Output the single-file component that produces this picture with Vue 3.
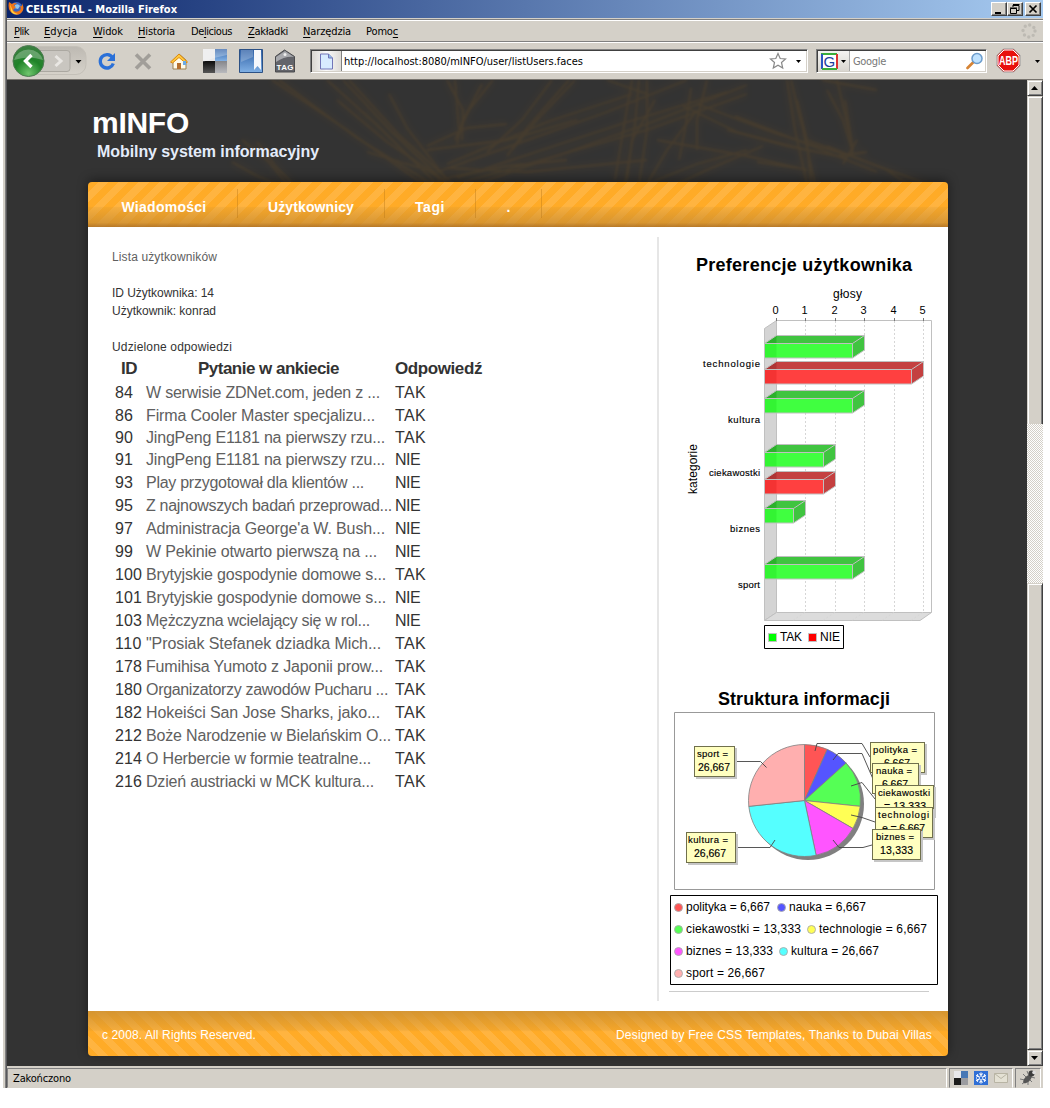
<script setup>
const vFit = {
  mounted(el, { value }) {
    const width = el.getBoundingClientRect().width
    el.style.letterSpacing = (value - width) / el.textContent.length + 'px'
  },
}

const menu = [
  ['', 'P', 'lik', 15, 15],
  ['', 'E', 'dycja', 33, 16],
  ['', 'W', 'idok', 30, 15],
  ['', 'H', 'istoria', 37, 16],
  ['De', 'l', 'icious', 41, 16],
  ['', 'Z', 'akładki', 40, 15],
  ['', 'N', 'arzędzia', 48, 15],
  ['Pomo', 'c', '', 32, 0],
]

const nav = [
  ['Wiadomości', 150, 85],
  ['Użytkownicy', 147, 86],
  ['Tagi', 91, 30],
  ['.', 66, 4],
]

const rows = [
  [84, 'W serwisie ZDNet.com, jeden z ...', 'TAK', 234],
  [86, 'Firma Cooler Master specjalizu...', 'TAK', 229],
  [90, 'JingPeng E1181 na pierwszy rzu...', 'TAK', 239],
  [91, 'JingPeng E1181 na pierwszy rzu...', 'NIE', 239],
  [93, 'Play przygotował dla klientów ...', 'NIE', 218],
  [95, 'Z najnowszych badań przeprowad...', 'NIE', 246],
  [97, "Administracja George'a W. Bush...", 'NIE', 239],
  [99, 'W Pekinie otwarto pierwszą na ...', 'NIE', 231],
  [100, 'Brytyjskie gospodynie domowe s...', 'TAK', 240],
  [101, 'Brytyjskie gospodynie domowe s...', 'NIE', 240],
  [103, 'Mężczyzna wcielający się w rol...', 'NIE', 224],
  [110, '"Prosiak Stefanek dziadka Mich...', 'TAK', 235],
  [178, 'Fumihisa Yumoto z Japonii prow...', 'TAK', 237],
  [180, 'Organizatorzy zawodów Pucharu ...', 'TAK', 242],
  [182, 'Hokeiści San Jose Sharks, jako...', 'TAK', 234],
  [212, 'Boże Narodzenie w Bielańskim O...', 'TAK', 245],
  [214, 'O Herbercie w formie teatralne...', 'TAK', 225],
  [216, 'Dzień austriacki w MCK kultura...', 'TAK', 228],
]

const ticks = [776.5, 805.5, 835.5, 864.5, 894.5, 923.5]
const bars = [
  [343.5, 3, 'g'],
  [369.5, 5, 'r'],
  [398.5, 3, 'g'],
  [452.5, 2, 'g'],
  [479.5, 2, 'r'],
  [508.5, 1, 'g'],
  [564.5, 3, 'g'],
].map(([y, v, c]) => ({ y, c, x: Math.round(764 + 29.4 * v) + 0.5 }))
const fills = {
  g: ['#40ff40', '#40c440', '#33f433', '#2bb12b'],
  r: ['#ff4040', '#c44040', '#f43333', '#ae3535'],
}
const categories = [
  ['technologie', 703, 367, 57],
  ['kultura', 728, 423, 32],
  ['ciekawostki', 709, 476, 51],
  ['biznes', 730, 532, 30],
  ['sport', 738, 588, 22],
]

const slices = [
  [0, 24, '#ff5555'],
  [24, 48, '#5555ff'],
  [48, 96, '#55ff55'],
  [96, 120, '#ffff55'],
  [120, 168, '#ff55ff'],
  [168, 264, '#55ffff'],
  [264, 360, '#ffafaf'],
].map(([a, b, color]) => {
  const at = (deg) => {
    const t = (deg * Math.PI) / 180
    return `${(804.5 + 56 * Math.sin(t)).toFixed(2)},${(800.5 - 56 * Math.cos(t)).toFixed(2)}`
  }
  return { color, d: `M804.5,800.5L${at(a)}A56,56 0 0 1 ${at(b)}Z` }
})
const leaders = [
  '815,751 817,743.5 862,743.5 870,757',
  '833,760 838,753.5 862,753.5 873,779',
  '851,786 862,782.5 875,799',
  '851,815 862,817.5 875,822',
  '833,840 839,847.5 863,847.5 872,845',
  '766.5,767.5 760.5,761.5 735,761.5',
  '775,840 770,847.5 736,847.5',
]
const tags = [
  [694, 746, 41, 31, 'sport =', 697, 31, '26,667', 698, 32],
  [686, 832, 50, 31, 'kultura =', 688, 40, '26,667', 694, 32],
  [870, 742, 55, 31, 'polityka =', 873, 44, '6,667', 884, 26],
  [872, 763, 47, 31, 'nauka =', 876, 36, '6,667', 882, 26],
  [875, 785, 59, 31, 'ciekawostki', 878, 52, '= 13,333', 884, 42],
  [875, 807, 58, 31, 'technologi', 878, 51, 'e = 6,667', 882, 43],
  [872, 829, 49, 31, 'biznes =', 876, 38, '13,333', 880, 33],
]
const legend = [
  [[678.5, 'polityka = 6,667', 686, 84, '#ff5555'], [781.5, 'nauka = 6,667', 789, 77, '#5555ff']],
  [[678.5, 'ciekawostki = 13,333', 686, 115, '#55ff55'], [811.5, 'technologie = 6,667', 819, 108, '#ffff55']],
  [[678.5, 'biznes = 13,333', 686, 87, '#ff55ff'], [783.5, 'kultura = 26,667', 791, 88, '#55ffff']],
  [[678.5, 'sport = 26,667', 686, 79, '#ffafaf']],
]

const wisps = [
  'M265 0L340 50 410 100 440 104', 'M272 0L350 58 425 104', 'M320 0L370 45 430 104', 'M336 0L385 52 440 104',
  'M342 0L392 55 446 104', 'M382 14L400 48 440 100', 'M330 20L380 62 440 102', 'M440 0L456 30 455 60', 'M475 4L455 42 450 64',
  'M486 0L462 30 448 60', 'M545 0L515 40 480 72', 'M568 0L530 40 505 70', 'M562 0L520 48 500 76', 'M625 14L540 42 440 84',
  'M680 0L600 32 430 92', 'M720 12L620 42 450 98', 'M740 5L640 44 470 104', 'M740 14L640 50 450 104', 'M625 0L618 40 608 100',
  'M632 0L628 45 618 104', 'M640 0L640 50 632 104', 'M648 20L625 60 620 100', 'M684 8L678 50 672 80', 'M690 30L660 70 640 104',
  'M676 26L730 52 800 70', 'M690 24L770 54 850 78', 'M728 36L800 64 870 92', 'M780 0L788 50 800 104', 'M784 0L796 50 808 104',
  'M790 20L800 60 804 104', 'M830 0L838 34 846 70', 'M820 10L836 40 846 74', 'M838 20L846 70', 'M800 60L860 82 920 104',
  'M820 66L880 90 900 104', 'M740 70L690 84 640 104', 'M756 66L700 90 670 104', 'M790 88L750 82', 'M420 70L500 60 570 40',
  'M360 72L420 90 440 104', 'M235 60L260 80 280 104', 'M225 82L250 96 270 104', 'M250 62L270 88 286 104', 'M440 88L520 92 640 80',
  'M430 100L500 86 560 80', 'M420 66L460 48 500 44', 'M448 0L452 50', 'M700 0L690 40 690 70', 'M815 0L870 10',
  'M600 0L640 14', 'M720 50L780 66 840 78', 'M650 60L740 76 800 90', 'M850 60L836 84', 'M830 76L860 72',
]
</script>

<template>
  <div class="window">
    <header class="titlebar">
      <svg width="17" height="17" viewBox="0 0 17 17"><circle cx="8.5" cy="7.5" r="6.5" fill="#3b66bd" /><path d="M7 4q3-2 5 1l-2 3-4-1z" fill="#8ac4ef" /><path d="M1 1l3 2q3-2 5 0-3 0-3 2l2 1-3 3q2 3 6 1 3-2 1-5 3 1 2-3 3 5 0 9-3 4-8 2Q-1 10 1 1z" fill="#ee7417" /><path d="M2 3l1 7q2 4 7 3-5-1-6-5z" fill="#ffd13c" /></svg>
      <b v-fit="151">CELESTIAL - Mozilla Firefox</b>
      <div class="winbtns">
        <i><svg width="14" height="13"><path d="M3 10h6" stroke="#000" stroke-width="2" /></svg></i>
        <i><svg width="14" height="13"><path d="M5 2.5h6v5H9M5 2v2M5 1.5h6.500M2.500 5.500h6v5h-6zM2 5h7" fill="none" stroke="#000" /></svg></i>
        <i class="close"><svg width="14" height="13"><path d="M3.500 2.500l7 7M10.500 2.500l-7 7" stroke="#000" stroke-width="1.700" /></svg></i>
      </div>
    </header>

    <nav class="menubar">
      <span v-for="m in menu" :key="m[2]" v-fit="m[3]" :style="{ marginRight: m[4] + 'px' }">{{ m[0] }}<u>{{ m[1] }}</u>{{ m[2] }}</span>
      <svg class="throbber" width="18" height="18" viewBox="-9 -9 18 18"><circle r="6" fill="none" stroke="#bdbab3" stroke-width="3.400" stroke-linecap="round" stroke-dasharray="0 4.712" /></svg>
    </nav>

    <div class="toolbar">
      <svg class="back" width="82" height="36" viewBox="7 43 82 36">
        <defs>
          <radialGradient id="green" cx=".5" cy=".9" r=".9"><stop offset="0" stop-color="#6fc56d" /><stop offset=".5" stop-color="#1f8328" /><stop offset="1" stop-color="#3d7f42" /></radialGradient>
          <linearGradient id="pill" x2="0" y2="1"><stop offset="0" stop-color="#bdb9b2" /><stop offset="1" stop-color="#d6d2ca" /></linearGradient>
        </defs>
        <rect x="15" y="46.500" width="71" height="28" rx="10" fill="url(#pill)" stroke="#c4c0b8" />
        <path d="M40 50.500h27q3 0 3 3v15q0 3-3 3H40" fill="#c9c6c0" stroke="#aba8a1" />
        <path d="M55.500 56l5.500 5-5.500 5" fill="none" stroke="#e9e7e3" stroke-width="3" />
        <circle cx="28.500" cy="61" r="15.500" fill="url(#green)" stroke="#4f7c53" />
        <path d="M14 60a15 14 0 0 1 29 0q-14-5-29 0z" fill="#fff" opacity=".27" />
        <path d="M31.500 55l-6 6 6 6" fill="none" stroke="#fff" stroke-width="3.400" />
        <path d="M75.500 60h6l-3 3.500z" />
      </svg>
      <svg class="tool" width="36" height="28" viewBox="89 47 36 28"><path d="M112.500 57.500a6.700 6.700 0 1 0 .8 6" fill="none" stroke="#2a70d8" stroke-width="3.300" /><path d="M115 53v8h-8z" fill="#2a70d8" /></svg>
      <svg class="tool" width="36" height="28" viewBox="125 47 36 28"><path d="M136 54.500l14 14M150 54.500l-14 14" stroke="#a19e99" stroke-width="3.600" /></svg>
      <svg class="tool" width="36" height="28" viewBox="161 47 36 28"><path d="M173 60v9h13v-9l-7-6z" fill="#fffbe9" stroke="#9b8252" /><path d="M170.500 62l8.500-8 8.500 8-2 1-6.500-5.500-6.500 5.500z" fill="#ffc83d" stroke="#dc8a11" /><path d="M177 63h4v6h-4z" fill="#b6702e" /><path d="M183 61h3v4h-3z" fill="#69abe7" /></svg>
      <svg class="tool" width="36" height="28" viewBox="197 47 36 28">
        <defs>
          <linearGradient id="dark" x2="0" y2="1"><stop offset="0" stop-color="#0c0c0c" /><stop offset="1" stop-color="#555" /></linearGradient>
          <linearGradient id="blue" x2="0" y2="1"><stop offset="0" stop-color="#2e5fa5" /><stop offset="1" stop-color="#81b1e5" /></linearGradient>
          <linearGradient id="gray" x2="0" y2="1"><stop offset="0" stop-color="#85868a" /><stop offset="1" stop-color="#b9babe" /></linearGradient>
        </defs>
        <path d="M203 49h12v12h-12z" fill="#e9e9eb" /><path d="M215 49h12v12h-12z" fill="url(#blue)" /><path d="M203 61h12v12h-12z" fill="url(#dark)" /><path d="M215 61h12v12h-12z" fill="url(#gray)" /><path d="M203 49h24v6q-12 2-24 7z" fill="#fff" opacity=".28" />
      </svg>
      <svg class="tool" width="36" height="28" viewBox="233 47 36 28"><path d="M239.500 49.500h23v23h-23z" fill="url(#blue)" stroke="#2c5185" /><path d="M254 50h7v20l-3.500-4-3.500 4z" fill="#f5f7fb" /><path d="M241 62l12-5v-7h-12z" fill="#fff" opacity=".22" /></svg>
      <svg class="tool" width="36" height="28" viewBox="269 47 36 28"><path d="M275.500 56.500l9-6.500 10 6.500v15.500h-19z" fill="#63646a" stroke="#4a4b4e" /><path d="M276 57l9-6 9 6q-9-1-18 5z" fill="#a9aaae" /><circle cx="285" cy="54.500" r="1.500" fill="#eee" /><text x="276.500" y="70" textLength="17" font-family="Liberation Sans, sans-serif" font-size="8" font-weight="700" fill="#fff">TAG</text></svg>
      <div class="field url">
        <span class="favicon"><svg width="15" height="17"><path d="M1.500 1h8l4 4v11h-12z" fill="#d8ebff" stroke="#7276b8" /><path d="M9.500 1v4h4" fill="#90bde9" stroke="#7276b8" /></svg></span>
        <span v-fit="239" class="address">http://localhost:8080/mINFO/user/listUsers.faces</span>
        <svg class="star" width="18" height="18" viewBox="0 0 18 18"><path d="M9 1.500l2.200 5 5.300.5-4 3.500 1.200 5.500L9 13.200 4.300 16l1.200-5.500-4-3.500 5.300-.5z" fill="#fff" stroke="#888" stroke-width="1.200" /></svg>
        <svg width="5" height="3"><path d="M0 0h5L2.500 3z" /></svg>
      </div>
      <div class="field search">
        <span class="engine"><svg width="17" height="17"><path d="M.5.500h16v16H.5z" fill="#fff" /><path d="M0 1h16" stroke="#3aad3a" stroke-width="2" /><path d="M1 1v15" stroke="#2a56c4" stroke-width="2" /><path d="M16 1v15" stroke="#d33" stroke-width="2" /><path d="M1 16h15" stroke="#3aad3a" stroke-width="2" /><text x="2.500" y="14" font-family="Liberation Sans, sans-serif" font-size="15" fill="#1d3d9e">G</text></svg><svg width="5" height="3"><path d="M0 0h5L2.500 3z" /></svg></span>
        <span v-fit="33" class="hint">Google</span>
        <svg class="lens" width="18" height="18"><path d="M1.500 16l6-6" stroke="#d68435" stroke-width="2.600" stroke-linecap="round" /><circle cx="11" cy="6.500" r="5" fill="#bfe2ff" stroke="#6c9ccc" stroke-width="1.500" /></svg>
      </div>
      <svg class="abp" width="25" height="25" viewBox="-12.500 -12.500 25 25"><path d="M-5-11.500H5L11.500-5V5L5 11.500H-5L-11.500 5V-5z" fill="#e8110c" stroke="#999" /><path d="M-4.500-10.500h9l6 6v9l-6 6h-9l-6-6v-9z" fill="none" stroke="#fff" /><text x="-9.500" y="4.500" textLength="19" lengthAdjust="spacingAndGlyphs" font-family="Liberation Sans, sans-serif" font-size="12" font-weight="700" fill="#fff">ABP</text></svg>
      <svg class="more" width="5" height="3"><path d="M0 0h5L2.500 3z" /></svg>
    </div>

    <div class="viewport">
      <main class="canvas">
        <div class="hero">
          <svg class="grass" width="1020" height="104" viewBox="0 0 1020 104">
            <g class="haze"><path v-for="w in wisps" :key="w" :d="w" /></g>
            <g class="strand"><path v-for="w in wisps" :key="w" :d="w" /></g>
          </svg>
          <h1><span v-fit="97">mINFO</span></h1>
          <h2><span v-fit="222">Mobilny system informacyjny</span></h2>
        </div>
        <div class="page">
          <nav class="tabs">
            <a v-for="n in nav" :key="n[0]" :style="{ width: n[1] + 'px' }"><span v-fit="n[2]">{{ n[0] }}</span></a>
          </nav>
          <div class="body">
            <section class="main">
              <p class="link"><span v-fit="105">Lista użytkowników</span></p>
              <p class="gap"><span v-fit="102">ID Użytkownika: 14</span></p>
              <p><span v-fit="104">Użytkownik: konrad</span></p>
              <p class="gap"><span v-fit="120">Udzielone odpowiedzi</span></p>
              <table>
                <thead>
                  <tr><th class="id"><span v-fit="16">ID</span></th><th class="q"><span v-fit="141">Pytanie w ankiecie</span></th><th class="a"><span v-fit="87">Odpowiedź</span></th></tr>
                </thead>
                <tbody>
                  <tr v-for="r in rows" :key="r[0]"><td><span v-fit="String(r[0]).length * 9">{{ r[0] }}</span></td><td class="link"><span v-fit="r[3]">{{ r[1] }}</span></td><td><span v-fit="r[2] === 'TAK' ? 31 : 25">{{ r[2] }}</span></td></tr>
                </tbody>
              </table>
            </section>
            <aside>
              <svg width="280" height="418" viewBox="660 237 280 418">
                <text class="title" x="696" y="271" textLength="216">Preferencje użytkownika</text>
                <text x="833" y="298" textLength="29">głosy</text>
                <text v-for="(t, i) in ticks" :key="t" class="tick" :x="t - 1" y="314">{{ i }}</text>
                <path d="M764.500 328.500l12-8v292l-12 8z" fill="#d4d4d4" stroke="#c0c0c0" />
                <path d="M764.500 620.500l12-8h155l-11.500 8z" fill="#dcdcdc" stroke="#c0c0c0" />
                <path d="M776.500 320.500h155v292" fill="none" stroke="#c0c0c0" />
                <path v-for="t in ticks.slice(1)" :key="t" :d="`M${t} 321V612l-12 8`" fill="none" stroke="#d6d6d6" stroke-dasharray="2 2" />
                <path v-for="t in ticks" :key="t" :d="`M${t} 318v3`" stroke="#777" />
                <g v-for="b in bars" :key="b.y">
                  <path :d="`M764.500 ${b.y}H${b.x}v14.500H764.500z`" :fill="fills[b.c][0]" />
                  <path :d="`M764.500 ${b.y}l12-8H${b.x + 12}v14.500l-12 8v-14.500z`" :fill="fills[b.c][1]" />
                  <path :d="`M764.500 ${b.y}h12v14.500h-12z`" :fill="fills[b.c][2]" />
                  <path :d="`M764.500 ${b.y}l12-8v8z`" :fill="fills[b.c][3]" />
                  <path :d="`M764.500 ${b.y}l12-8H${b.x + 12}v14.500l-12 8H764.500zM764.500 ${b.y}H${b.x}l12-8M${b.x} ${b.y}v14.500`" fill="none" stroke="#c0c0c0" />
                </g>
                <text v-for="c in categories" :key="c[0]" class="small" :x="c[1]" :y="c[2]" :textLength="c[3]">{{ c[0] }}</text>
                <text transform="translate(697 494)rotate(-90)" textLength="50">kategorie</text>
                <path d="M764.500 625.500h79v23h-79z" fill="#fff" stroke="#000" />
                <path d="M768.500 633.500h8v8h-8z" fill="#0f0" stroke="#c0c0c0" /><path d="M808.500 633.500h8v8h-8z" fill="#f00" stroke="#c0c0c0" />
                <text x="780" y="641" textLength="22">TAK</text><text x="820" y="641" textLength="20">NIE</text>
              </svg>
              <svg width="280" height="331" viewBox="660 655 280 331">
                <text class="title" x="718" y="705" textLength="172">Struktura informacji</text>
                <path d="M674.500 712.500h260v177h-260z" fill="#fff" stroke="#999" />
                <circle cx="808" cy="804" r="56" fill="#808080" />
                <path v-for="s in slices" :key="s.d" :d="s.d" :fill="s.color" stroke="#808080" stroke-width=".8" />
                <polyline v-for="l in leaders" :key="l" :points="l" fill="none" stroke="#444" stroke-width=".9" />
                <g v-for="t in tags" :key="t[4]">
                  <rect :x="t[0] + 2" :y="t[1] + 2" :width="t[2]" :height="t[3]" fill="#c6c6c6" />
                  <rect :x="t[0] + .5" :y="t[1] + .5" :width="t[2] - 1" :height="t[3] - 1" fill="#ffffc0" stroke="#70704c" />
                  <text class="small" :x="t[5]" :y="t[1] + 11" :textLength="t[6]">{{ t[4] }}</text>
                  <text class="small num" :x="t[8]" :y="t[1] + 25" :textLength="t[9]">{{ t[7] }}</text>
                </g>
                <path d="M670.500 895.500h267v89h-267z" fill="#fff" stroke="#000" />
                <g v-for="(line, i) in legend" :key="i">
                  <g v-for="k in line" :key="k[1]"><circle :cx="k[0]" :cy="907.500 + i * 22" r="4" :fill="k[4]" stroke="#aaa" stroke-width=".9" /><text :x="k[2]" :y="911 + i * 22" :textLength="k[3]">{{ k[1] }}</text></g>
                </g>
              </svg>
              <hr>
            </aside>
          </div>
          <footer class="foot"><span v-fit="154">c 2008. All Rights Reserved.</span><span v-fit="316">Designed by Free CSS Templates, Thanks to Dubai Villas</span></footer>
        </div>
      </main>
      <div class="scroll">
        <i><svg width="8" height="4"><path d="M0 4h7L3.500 0z" /></svg></i>
        <b class="t1"></b><em></em><b class="t2"></b>
        <i><svg width="8" height="4"><path d="M0 0h7L3.500 4z" /></svg></i>
      </div>
    </div>

    <div class="status">
      <span class="cell grow"><span v-fit="58">Zakończono</span></span>
      <span class="cell icons">
        <svg width="14" height="14"><path d="M0 0h7v7H0z" fill="#e8e8ea" /><path d="M7 0h7v7H7z" fill="#4878b5" /><path d="M0 7h7v7H0z" fill="#1c1c1c" /><path d="M7 7h7v7H7z" fill="#9b9ca0" /></svg>
        <svg width="14" height="14"><path d="M0 0h14v14H0z" fill="#2f6fd6" /><path d="M7 1.500v11M2.200 4.200l9.600 5.600M11.800 4.200L2.200 9.800" stroke="#fff" stroke-width="1.200" /><path d="M5 2.500l2 1.500 2-1.500M5 11.500L7 10l2 1.500M2 6.500l1.800-1.200L3.500 3M12 7.500l-1.800 1.200.3 2.300M12 6.500l-1.800-1.200.3-2.300M2 7.500l1.800 1.200L3.500 11" fill="none" stroke="#fff" stroke-width=".9" /><circle cx="7" cy="7" r="1.200" fill="#2f6fd6" /></svg>
        <svg width="14" height="12"><path d="M.5 1.500h13v9H.5z" fill="#e4e1d4" stroke="#b8b4a4" /><path d="M.5 1.500l6.500 5 6.500-5" fill="none" stroke="#b8b4a4" /></svg>
      </span>
      <span class="cell bug"><svg width="18" height="18"><path d="M1 10l5 1M4 5l4 4M3 15l4-3M9 16v-4M8 2l2 5M13 13l-3-3M16 9l-4-1" stroke="#777" /><ellipse cx="8.500" cy="10" rx="5.500" ry="2.700" transform="rotate(-45 8.500 10)" fill="#555" /><circle cx="12.500" cy="4.500" r="3" fill="#3c3c3c" /><circle cx="15" cy="3.500" r="1.800" fill="#ddd" /></svg></span>
    </div>
  </div>
</template>

<style>
body { margin: 0; background: #fff; overflow: hidden; }
</style>

<style scoped>
* { box-sizing: border-box; }
svg { display: block; flex: none; }
i, em { font-style: normal; }
.window { width: 1040px; height: 1088px; margin-left: 3px; padding-left: 4px; background: linear-gradient(90deg, #d4d0c8 2px, #808080 2px 3px, #59595c 3px 4px, #d4d0c8 4px); font: 11px/15px "DejaVu Sans Condensed", "DejaVu Sans", sans-serif; color: #000; white-space: nowrap; }
.titlebar { height: 18px; display: flex; align-items: center; background: linear-gradient(90deg, #0a246a, #a6caf0); color: #fff; }
.titlebar > svg { margin-left: 1px; }
.titlebar b { margin-left: 1px; }
.winbtns { align-self: flex-start; margin: 2px 2px 0 auto; display: flex; }
.winbtns i { width: 16px; height: 14px; background: #d4d0c8; border: 1px solid; border-color: #fff #404040 #404040 #fff; box-shadow: inset -1px -1px #808080; }
.winbtns .close { margin-left: 2px; }
.menubar { height: 25px; padding: 2px 5px 0 7px; display: flex; align-items: center; border-bottom: 1px solid #fff; background: linear-gradient(#d4d0c8 1px, #808080 1px 2px, #fff 2px 3px, #d4d0c8 3px 23px, #808080 23px); }
.menubar u { text-underline-offset: 2px; }
.throbber { margin-left: auto; }
.toolbar { height: 37px; display: flex; align-items: flex-start; border-bottom: 1px solid #77736d; }
.tool { margin-top: 4px; }
.field { height: 24px; margin-top: 6px; display: flex; align-items: center; background: #fff; border: 1px solid; border-color: #808080 #fff #fff #808080; box-shadow: inset 1px 1px #404040, inset -1px -1px #d4d0c8; }
.url { width: 498px; margin-left: 5px; padding-right: 6px; }
.favicon { width: 30px; height: 20px; margin-left: 1px; display: grid; place-items: center; border-right: 1px solid #808080; background: linear-gradient(90deg, #d9d6d1, #fafafa 50%, #dedbd6); }
.address { margin: 1px 0 0 2px; }
.star { margin-left: auto; margin-right: 9px; }
.search { width: 171px; margin-left: 8px; }
.engine { width: 32px; height: 20px; margin-left: 1px; display: flex; align-items: center; gap: 3px; padding-left: 3px; background: linear-gradient(#f4f3f1, #d9d6d0); border-right: 1px solid #aaa; }
.hint { margin: 1px 0 0 3px; color: #777; }
.lens { margin-left: auto; margin-right: 2px; }
.abp { margin: 5px 0 0 9px; }
.more { margin: 17px 0 0 14px; }

.viewport { height: 986px; display: flex; background: #333; }
.canvas { width: 1020px; font: 12px/18px "Liberation Sans", Arial, sans-serif; color: #333; }
.hero { height: 102px; padding: 25px 0 0 85px; position: relative; }
.grass { position: absolute; left: 0; top: 0; fill: none; stroke: #8a5d1e; }
.haze { stroke-width: 7px; opacity: .07; filter: blur(3px); }
.strand { stroke-width: 1.800px; opacity: .16; filter: blur(.8px); }
h1, h2, p { margin: 0; position: relative; }
h1 { color: #fff; font-size: 30px; line-height: 36px; }
h2 { margin: 1px 0 0 5px; color: #e4ecfa; font-size: 16px; line-height: 20px; }
.page { width: 860px; margin-left: 81px; position: relative; border-radius: 4px; box-shadow: 0 -2px 11px rgba(0, 0, 0, .45); }
.tabs { height: 45px; display: flex; padding-top: 7px; border-radius: 4px 4px 0 0; background: linear-gradient(rgba(195, 130, 45, 0) 54%, rgba(205, 145, 50, .22) 57%, rgba(200, 140, 50, .7) 90%, rgba(175, 115, 40, .9)), repeating-linear-gradient(135deg, #ffab27 0 7.200px, #ffb440 7.200px 14.400px); }
.tabs a { height: 29px; padding-top: 9px; text-align: center; color: #fff; font-size: 14px; line-height: 18px; font-weight: 700; border-right: 1px solid rgba(180, 115, 20, .38); }
.tabs a:first-child { padding-left: 3px; }
.body { height: 784px; display: flex; background: #fff; }
.main { width: 569px; padding: 21px 0 0 24px; }
.gap { margin-top: 18px; }
.link { color: #606060; }
table { margin: 1px 0 0 3px; border-collapse: collapse; table-layout: fixed; width: 378px; font-size: 16px; line-height: 20px; }
tr { height: 23px; }
thead tr { height: 24px; }
tbody tr:nth-child(3) { height: 21px; }
td, th { padding: 0; text-align: left; vertical-align: middle; }
th { font-size: 17px; padding-bottom: 1px; }
.id { width: 31px; padding-left: 6px; }
.q { width: 249px; padding-left: 52px; }
aside { width: 281px; margin-top: 10px; height: 764px; padding-left: 1px; border-left: 2px solid #e6e6e6; }
aside svg text { font: 12px "Liberation Sans", Arial, sans-serif; fill: #000; }
aside svg .title { font-size: 18px; font-weight: 700; }
aside svg .tick { font-size: 11px; text-anchor: middle; }
aside svg .small { font-size: 9.500px; stroke: #000; stroke-width: .15px; }
aside svg .small.num { font-size: 10.500px; }
hr { width: 260px; height: 1px; margin: 5px 0 0 9px; border: 0; background: #ccc; }
.foot { height: 45px; padding: 3px 16px 0 14px; display: flex; justify-content: space-between; align-items: center; color: #fff; border-radius: 0 0 4px 4px; background: linear-gradient(rgba(205, 145, 50, .85), rgba(205, 145, 50, .25) 42%, rgba(205, 145, 50, 0) 46%), repeating-linear-gradient(45deg, #ffab27 0 7.200px, #ffb440 7.200px 14.400px); }
.scroll { width: 16px; display: flex; flex-direction: column; }
.scroll i, .scroll b { background: #d4d0c8; border: 1px solid; border-color: #d4d0c8 #404040 #404040 #d4d0c8; box-shadow: inset 1px 1px #fff, inset -1px -1px #808080; }
.scroll i { height: 16px; display: grid; place-items: center; }
.scroll .t1 { height: 328px; border-bottom: 0; box-shadow: inset 1px 1px #fff, inset -1px 0 #808080; }
.scroll em { height: 159px; background: repeating-conic-gradient(#d4d0c8 0 25%, #fff 0 50%) 0 0 / 2px 2px; }
.t2 { flex: 1; }
.status { height: 22px; display: flex; gap: 2px; padding: 2px 2px 0 0; }
.cell { height: 20px; display: flex; align-items: center; border: 1px solid; border-color: #808080 #fff #d4d0c8 #808080; }
.grow { flex: 1; padding-left: 5px; }
.icons { width: 64px; padding-left: 4px; gap: 6px; }
.bug { width: 26px; padding-left: 3px; }
</style>
